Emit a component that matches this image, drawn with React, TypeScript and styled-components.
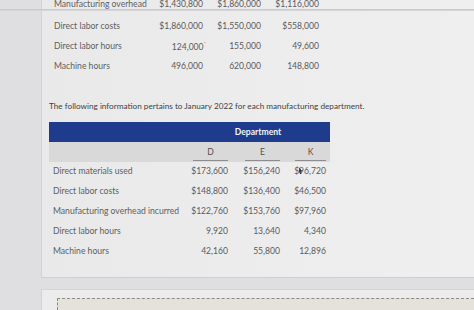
import React from "react";
import styled, { createGlobalStyle } from "styled-components";

const Global = createGlobalStyle`
  html, body { margin: 0; padding: 0; }
  body {
    width: 474px; height: 310px; overflow: hidden;
    background: #dfdfe1;
    font-family: Lato, "Open Sans", sans-serif;
  }
`;

const Page = styled.div`
  position: relative;
  width: 474px;
  height: 310px;
  overflow: hidden;
  display: flex;
  flex-direction: column;
`;

const TopShadow = styled.div`
  position: absolute;
  left: 0; right: 0; top: 9px;
  height: 2px;
  background: linear-gradient(#c6c6c8, #dadadc);
`;

const Panel = styled.div`
  margin-left: 41px;
  height: 278px;
  box-sizing: border-box;
  border-left: 1px solid #d2d2d4;
  border-bottom: 1px solid #cfcfd1;
  background: linear-gradient(90deg, #e9e9ea 0%, #ededee 60%, #efefef 100%);
  display: flex;
  flex-direction: column;
  align-items: flex-start;
  flex-shrink: 0;
`;

const LowerPanel = styled.div`
  margin-top: 11px;
  margin-left: 41px;
  flex: 1;
  border-left: 1px solid #d2d2d4;
  border-top: 1px solid #d4d4d6;
  background: #ececed;
  padding: 8px 0 0 15px;
`;

const AnswerBox = styled.div`
  height: 20px;
  border-top: 1px dashed #8a8a86;
  border-left: 1px dashed #8a8a86;
  background: #e4e2da;
`;

const TopGrid = styled.div`
  margin-top: -7px;
  padding-left: 12px;
  display: grid;
  grid-template-columns: 96px 53px 58px 58px;
  grid-template-rows: 22.5px 20px 20px 20px;
  align-items: center;
`;

const Label = styled.div`
  font-size: 8.6px;
  color: #5e5e60;
  white-space: nowrap;
`;

const Value = styled.div`
  font-size: 8.6px;
  color: #5a5a5c;
  text-align: right;
  white-space: nowrap;
`;

const Tick = styled.sup`
  font-size: 6px;
  margin-right: -3px;
  vertical-align: 4px;
`;

const Section = styled.div`
  margin-top: 25px;
  padding-left: 7px;
  display: flex;
  flex-direction: column;
  align-items: flex-start;
`;

const Intro = styled.div`
  font-size: 8.2px;
  line-height: 10px;
  color: #3f3f42;
  white-space: nowrap;
`;

const Table = styled.div`
  margin-top: 11px;
  width: 281px;
  display: grid;
  grid-template-columns: 141px 38px 52px 46px;
  padding-right: 4px;
  box-sizing: border-box;
`;

const HeadBand = styled.div<{ $bg: string }>`
  grid-column: 1 / -1;
  display: grid;
  grid-template-columns: subgrid;
  height: 20px;
  align-items: center;
  background: ${(p) => p.$bg};
  margin-right: -4px;
  padding-right: 4px;
`;

const DeptTitle = styled.div`
  grid-column: 2 / 5;
  text-align: center;
  color: #f2f4fa;
  font-weight: 700;
  font-size: 8.6px;
`;

const ColHead = styled.div<{ $w: number }>`
  justify-self: end;
  width: ${(p) => p.$w}px;
  text-align: center;
  font-size: 8.6px;
  color: #505052;
  padding-bottom: 3px;
  border-bottom: 1px solid #8d8d90;
  margin-top: 4px;
`;

const Row = styled.div`
  grid-column: 1 / -1;
  display: grid;
  grid-template-columns: subgrid;
  height: 19.8px;
  align-items: center;
`;

const RowLabel = styled(Label)`
  padding-left: 4px;
`;

const Cursor = styled.span`
  position: relative;
`;

const CursorMark = styled.span`
  position: absolute;
  left: 5px;
  top: 1px;
  width: 3px;
  height: 7px;
  background: #2a2a2c;
  clip-path: polygon(0 0, 100% 60%, 50% 60%, 70% 100%, 30% 100%, 20% 70%, 0 85%);
`;

const topRows = [
  ["Manufacturing overhead", "$1,430,800", "$1,860,000", "$1,116,000"],
  ["Direct labor costs", "$1,860,000", "$1,550,000", "$558,000"],
  ["Direct labor hours", "124,000", "155,000", "49,600"],
  ["Machine hours", "496,000", "620,000", "148,800"],
];

const deptRows = [
  ["Direct materials used", "$173,600", "$156,240", "$96,720"],
  ["Direct labor costs", "$148,800", "$136,400", "$46,500"],
  ["Manufacturing overhead incurred", "$122,760", "$153,760", "$97,960"],
  ["Direct labor hours", "9,920", "13,640", "4,340"],
  ["Machine hours", "42,160", "55,800", "12,896"],
];

export default function App() {
  return (
    <Page>
      <Global />
      <Panel>
        <TopGrid>
          {topRows.map((r) => (
            <React.Fragment key={r[0]}>
              <Label>{r[0]}</Label>
              <Value>
                {r[1]}
                {r[1] === "124,000" && <Tick>ˉ</Tick>}
              </Value>
              <Value>{r[2]}</Value>
              <Value>{r[3]}</Value>
            </React.Fragment>
          ))}
        </TopGrid>
        <Section>
          <Intro>The following information pertains to January 2022 for each manufacturing department.</Intro>
          <Table>
            <HeadBand $bg="#1f3c8c">
              <div />
              <DeptTitle>Department</DeptTitle>
            </HeadBand>
            <HeadBand $bg="#d9d9da">
              <div />
              <ColHead $w={35}>D</ColHead>
              <ColHead $w={35}>E</ColHead>
              <ColHead $w={31}>K</ColHead>
            </HeadBand>
            <Row style={{ height: 0 }} />
            {deptRows.map((r, i) => (
              <Row key={r[0]}>
                <RowLabel>{r[0]}</RowLabel>
                <Value>{r[1]}</Value>
                <Value>{r[2]}</Value>
                <Value>
                  {i === 0 ? (
                    <Cursor>
                      {r[3]}
                      <CursorMark />
                    </Cursor>
                  ) : (
                    r[3]
                  )}
                </Value>
              </Row>
            ))}
          </Table>
        </Section>
      </Panel>
      <LowerPanel>
        <AnswerBox />
      </LowerPanel>
      <TopShadow />
    </Page>
  );
}
